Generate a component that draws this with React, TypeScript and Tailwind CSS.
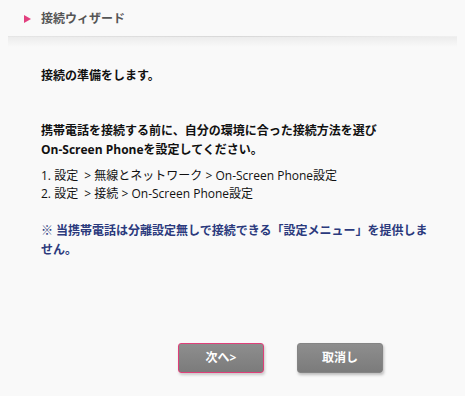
export default function App() {
  return (
    <div
      className="w-[465px] h-[396px] bg-[#f9f9f9] flex flex-col text-[12px] text-[#111]"
      style={{ fontFamily: '"Open Sans", "Noto Sans CJK JP", sans-serif' }}
    >
      {/* header */}
      <div className="h-[36px] flex items-center pl-[24px] pt-[2px]">
        <svg width="7" height="8" viewBox="0 0 7 8" className="mr-[10px]">
          <polygon points="0,0 7,4 0,8" fill="#e2407f" />
        </svg>
        <span className="font-bold text-[#555] text-[12px]">接続ウィザード</span>
      </div>
      <div className="mx-[8px] h-px bg-gradient-to-r from-[#e6e6e6] via-[#d8d8d8] to-[#f0f0f0]" />
      <div className="mx-[8px] h-[10px] bg-gradient-to-b from-[#ececec] to-[#f9f9f9]" />

      {/* body */}
      <div className="pl-[41px] pr-[20px] flex flex-col">
        <p className="mt-[20px] font-bold leading-[18px]">接続の準備をします。</p>

        <p className="mt-[36px] font-bold leading-[19px]">
          携帯電話を接続する前に、自分の環境に合った接続方法を選び
          <br />
          On-Screen Phoneを設定してください。
        </p>

        <div className="mt-[8px] leading-[18px]">
          <p>1. 設定 &nbsp;&gt; 無線とネットワーク &gt; On-Screen Phone設定</p>
          <p>2. 設定 &nbsp;&gt; 接続 &gt; On-Screen Phone設定</p>
        </div>

        <p className="mt-[18px] font-bold leading-[19px] text-[#2b3a7d] pr-[16px]">
          ※ 当携帯電話は分離設定無しで接続できる「設定メニュー」を提供しません。
        </p>
      </div>

      {/* buttons */}
      <div className="mt-auto mb-[23px] flex justify-center gap-[33px] pl-[96px]">
        <button className="w-[86px] h-[30px] rounded-[3px] border border-[#df3f79] bg-gradient-to-b from-[#8e8e8e] to-[#7b7b7b] text-white font-bold text-[12px] shadow-[1px_2px_3px_rgba(0,0,0,0.2)]">
          次へ&gt;
        </button>
        <button className="w-[86px] h-[30px] rounded-[3px] border border-[#858585] bg-gradient-to-b from-[#8e8e8e] to-[#7b7b7b] text-white font-bold text-[12px] shadow-[1px_2px_3px_rgba(0,0,0,0.25)]">
          取消し
        </button>
      </div>
    </div>
  );
}
